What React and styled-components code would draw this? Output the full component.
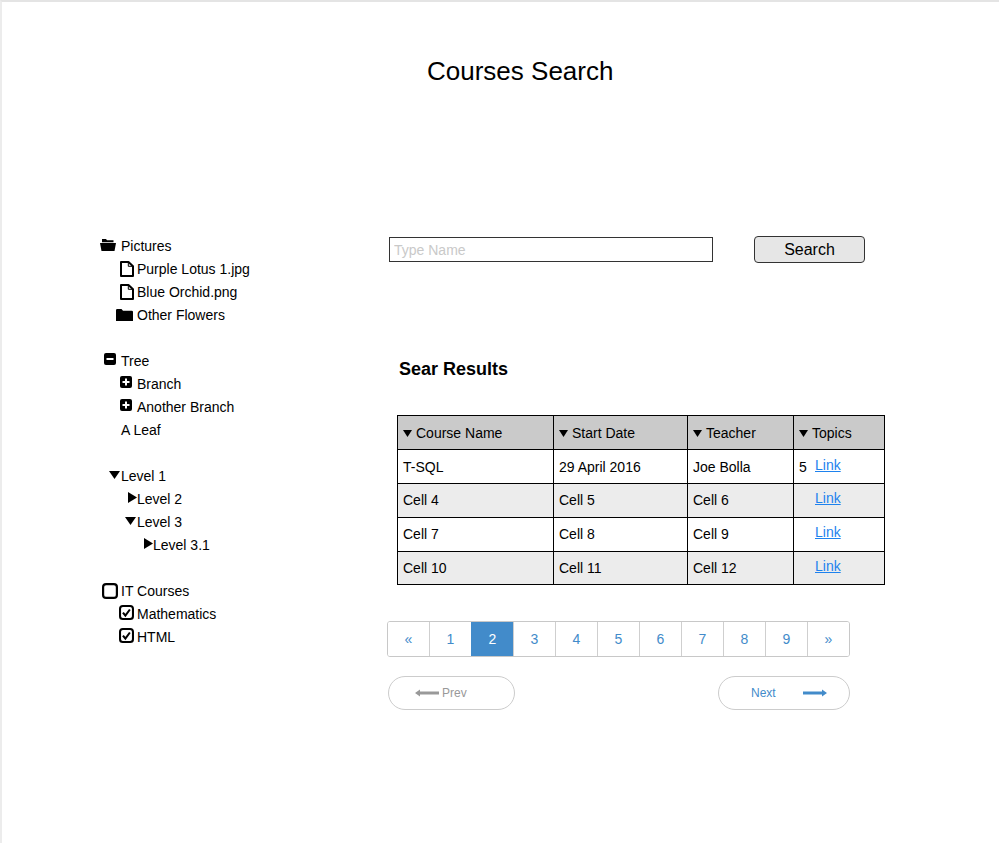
import React from "react";
import styled, { createGlobalStyle } from "styled-components";

const GlobalStyle = createGlobalStyle`
  html, body {
    margin: 0;
    padding: 0;
    background: #fff;
  }
  body {
    font-family: "Liberation Sans", Arial, sans-serif;
    color: #000;
  }
`;

const Page = styled.div`
  box-sizing: border-box;
  height: 843px;
  overflow: hidden;
  border-top: 2px solid #e4e4e4;
  border-left: 2px solid #ececec;
`;

const Header = styled.header`
  height: 232px;
  padding: 54px 0 0 425px;
  box-sizing: border-box;
`;

const Title = styled.h1`
  margin: 0;
  font-size: 26px;
  line-height: 30px;
  font-weight: 400;
`;

const Content = styled.div`
  display: flex;
  padding-left: 98px;
`;

const Sidebar = styled.aside`
  width: 287px;
  flex: none;
  display: flex;
  flex-direction: column;
  gap: 23px;
`;

const TreeGroup = styled.div`
  display: flex;
  flex-direction: column;
`;

const TreeRow = styled.div`
  display: flex;
  align-items: center;
  height: 23px;
  font-size: 14px;
  padding-left: ${(props) => (props.$level || 0) * 16}px;
`;

const IconSlot = styled.span`
  width: 21px;
  height: 23px;
  flex: none;
  display: flex;
  align-items: center;
  justify-content: flex-end;
  padding-right: ${(props) => props.$gap || 0}px;
  box-sizing: border-box;

  svg {
    display: block;
    position: relative;
    top: ${(props) => props.$lift || 0}px;
  }
`;

const Main = styled.main`
  width: 500px;
  flex: none;
`;

const SearchBar = styled.div`
  display: flex;
  align-items: center;
  gap: 41px;
  padding: 2px 0 0 2px;
`;

const SearchInput = styled.input`
  box-sizing: border-box;
  width: 324px;
  height: 25px;
  padding: 0 4px;
  border: 1px solid #333;
  border-radius: 0;
  background: #fff;
  font-family: inherit;
  font-size: 14px;
  outline: none;

  &::placeholder {
    color: #c9c9c9;
    opacity: 1;
  }
`;

const SearchButton = styled.button`
  box-sizing: border-box;
  width: 111px;
  height: 27px;
  padding: 0;
  border: 1px solid #333;
  border-radius: 4px;
  background: #e6e6e6;
  color: #000;
  font-family: inherit;
  font-size: 16px;
`;

const ResultsTitle = styled.h2`
  margin: 96px 0 35px 12px;
  font-size: 18px;
  line-height: 21px;
  font-weight: 700;
`;

const ResultsTable = styled.table`
  border-collapse: collapse;
  table-layout: fixed;
  width: 487px;
  margin-left: 10px;
  font-size: 14px;
`;

const HeadCell = styled.th`
  height: 34px;
  padding: 0 0 0 5px;
  box-sizing: border-box;
  border: 1px solid #000;
  background: #cacaca;
  font-weight: 400;
  text-align: left;
`;

const HeadLabel = styled.span`
  display: flex;
  align-items: center;
  gap: 4px;

  svg {
    margin-top: 2px;
  }
`;

const BodyRow = styled.tr`
  background: ${(props) => (props.$shaded ? "#ececec" : "#fff")};

  &:nth-child(n + 2) td {
    padding-bottom: 1px;
  }

  &:last-child td {
    height: 33px;
  }
`;

const Cell = styled.td`
  height: 34px;
  padding: 0 0 0 5px;
  box-sizing: border-box;
  border: 1px solid #000;
`;

const TopicsWrap = styled.div`
  display: flex;
  align-items: center;
`;

const TopicCount = styled.span`
  width: 16px;
  flex: none;
`;

const CellLink = styled.a`
  color: #1e82ee;
  text-decoration: underline;
  margin-bottom: 4px;
`;

const Pagination = styled.nav`
  display: flex;
  width: max-content;
  margin-top: 36px;
  border: 1px solid #c8c8c8;
  border-radius: 3px;
  overflow: hidden;
`;

const PageItem = styled.a`
  box-sizing: border-box;
  width: 42px;
  height: 34px;
  display: flex;
  align-items: center;
  justify-content: center;
  font-size: 14px;
  color: ${(props) => (props.$active ? "#fff" : "#428bca")};
  background: ${(props) => (props.$active ? "#428bca" : "#fff")};
  border-left: 1px solid ${(props) => (props.$active ? "#428bca" : "#cfcfcf")};

  &:first-child {
    border-left: 0;
    width: 41px;
  }
`;

const PagerNav = styled.div`
  display: flex;
  justify-content: space-between;
  width: 462px;
  margin: 19px 0 0 1px;
`;

const PagerButton = styled.a`
  box-sizing: border-box;
  width: ${(props) => props.$width}px;
  height: 34px;
  display: flex;
  align-items: center;
  gap: ${(props) => props.$gap}px;
  padding-left: ${(props) => props.$inset}px;
  border: 1px solid #ccc;
  border-radius: 17px;
  font-size: 12px;
  color: ${(props) => props.$color};
`;

const FolderOpen = () => (
  <svg width="16" height="12" viewBox="0 0 16 12">
    <path d="M2 0h4l1 1.200h6.500v2H2z" fill="#000" />
    <path d="M0 4h16l-1.500 8h-13z" fill="#000" />
  </svg>
);

const Folder = () => (
  <svg width="17" height="12" viewBox="0 0 17 12">
    <path d="M0 1.200Q0 0 1.200 0h4.300L7 1.800h8.800Q17 1.800 17 3v9H0z" fill="#000" />
  </svg>
);

const FileIcon = () => (
  <svg width="14" height="16" viewBox="0 0 14 16">
    <path d="M1 1h7.500L13 5.200V15H1z" fill="none" stroke="#000" strokeWidth="2" strokeLinejoin="round" />
    <path d="M8.300 1v4.300H13" fill="none" stroke="#000" strokeWidth="1" />
  </svg>
);

const MinusBox = () => (
  <svg width="12" height="12" viewBox="0 0 12 12">
    <rect width="12" height="12" rx="2" fill="#000" />
    <rect x="2.500" y="5" width="7" height="2" fill="#fff" />
  </svg>
);

const PlusBox = () => (
  <svg width="12" height="12" viewBox="0 0 12 12">
    <rect width="12" height="12" rx="2" fill="#000" />
    <path d="M2.500 5H5V2.500h2V5h2.500v2H7v2.500H5V7H2.500z" fill="#fff" />
  </svg>
);

const CaretDown = ({ width = 11, height = 8 }) => (
  <svg width={width} height={height} viewBox="0 0 10 7" preserveAspectRatio="none">
    <path d="M0 0h10L5 7z" fill="#000" />
  </svg>
);

const CaretRight = () => (
  <svg width="9" height="11" viewBox="0 0 8 10" preserveAspectRatio="none">
    <path d="M0 0l8 5-8 5z" fill="#000" />
  </svg>
);

const CheckBox = ({ checked, size = 16 }) => (
  <svg width={size} height={size} viewBox="0 0 16 16">
    <rect x="1.100" y="1.100" width="13.800" height="13.800" rx="3" fill="#fff" stroke="#000" strokeWidth="2.200" />
    {checked && <path d="M4.200 8.200l2.600 3 4.800-6.400" fill="none" stroke="#000" strokeWidth="2.200" />}
  </svg>
);

const Arrow = ({ color, flip }) => (
  <svg width="24" height="8" viewBox="0 0 24 8" style={flip ? { transform: "scaleX(-1)" } : undefined}>
    <path d="M0 2.600h19V.5l5 3.500-5 3.500V5.400H0z" fill={color} />
  </svg>
);

const Row = ({ level, icon, gap, lift, children }) => (
  <TreeRow $level={level}>
    <IconSlot $gap={gap} $lift={lift}>{icon}</IconSlot>
    <span>{children}</span>
  </TreeRow>
);

const PAGES = ["«", "1", "2", "3", "4", "5", "6", "7", "8", "9", "»"];
const COLUMNS = [
  { label: "Course Name", width: 156 },
  { label: "Start Date", width: 134 },
  { label: "Teacher", width: 106 },
  { label: "Topics", width: 91 },
];
const ROWS = [
  ["T-SQL", "29 April 2016", "Joe Bolla", "5"],
  ["Cell 4", "Cell 5", "Cell 6", ""],
  ["Cell 7", "Cell 8", "Cell 9", ""],
  ["Cell 10", "Cell 11", "Cell 12", ""],
];

function App() {
  return (
    <>
      <GlobalStyle />
      <Page>
        <Header>
          <Title>Courses Search</Title>
        </Header>
        <Content>
          <Sidebar>
            <TreeGroup>
              <Row icon={<FolderOpen />} gap={5} lift={-1}>Pictures</Row>
              <Row level={1} icon={<FileIcon />} gap={3}>Purple Lotus 1.jpg</Row>
              <Row level={1} icon={<FileIcon />} gap={3}>Blue Orchid.png</Row>
              <Row level={1} icon={<Folder />} gap={4}>Other Flowers</Row>
            </TreeGroup>
            <TreeGroup>
              <Row icon={<MinusBox />} gap={5} lift={-2}>Tree</Row>
              <Row level={1} icon={<PlusBox />} gap={5} lift={-2}>Branch</Row>
              <Row level={1} icon={<PlusBox />} gap={5} lift={-2}>Another Branch</Row>
              <Row>A Leaf</Row>
            </TreeGroup>
            <TreeGroup>
              <Row icon={<CaretDown />} gap={1} lift={-1}>Level 1</Row>
              <Row level={1} icon={<CaretRight />} lift={-1}>Level 2</Row>
              <Row level={1} icon={<CaretDown />} gap={1} lift={-1}>Level 3</Row>
              <Row level={2} icon={<CaretRight />} lift={-1}>Level 3.1</Row>
            </TreeGroup>
            <TreeGroup>
              <Row icon={<CheckBox />} gap={3}>IT Courses</Row>
              <Row level={1} icon={<CheckBox checked size={15} />} gap={3} lift={-1}>Mathematics</Row>
              <Row level={1} icon={<CheckBox checked size={15} />} gap={3} lift={-1}>HTML</Row>
            </TreeGroup>
          </Sidebar>

          <Main>
            <SearchBar>
              <SearchInput placeholder="Type Name" />
              <SearchButton>Search</SearchButton>
            </SearchBar>

            <ResultsTitle>Sear Results</ResultsTitle>

            <ResultsTable>
              <colgroup>
                {COLUMNS.map((col) => (
                  <col key={col.label} width={col.width} />
                ))}
              </colgroup>
              <thead>
                <tr>
                  {COLUMNS.map((col) => (
                    <HeadCell key={col.label}>
                      <HeadLabel>
                        <CaretDown width={9} height={7} />
                        {col.label}
                      </HeadLabel>
                    </HeadCell>
                  ))}
                </tr>
              </thead>
              <tbody>
                {ROWS.map((row, i) => (
                  <BodyRow key={row[0]} $shaded={i % 2 === 1}>
                    <Cell>{row[0]}</Cell>
                    <Cell>{row[1]}</Cell>
                    <Cell>{row[2]}</Cell>
                    <Cell>
                      <TopicsWrap>
                        <TopicCount>{row[3]}</TopicCount>
                        <CellLink href="#">Link</CellLink>
                      </TopicsWrap>
                    </Cell>
                  </BodyRow>
                ))}
              </tbody>
            </ResultsTable>

            <Pagination>
              {PAGES.map((page) => (
                <PageItem key={page} $active={page === "2"}>{page}</PageItem>
              ))}
            </Pagination>

            <PagerNav>
              <PagerButton $width={127} $gap={3} $inset={26} $color="#999">
                <Arrow color="#999" flip />
                Prev
              </PagerButton>
              <PagerButton $width={132} $gap={27} $inset={32} $color="#428bca">
                Next
                <Arrow color="#428bca" />
              </PagerButton>
            </PagerNav>
          </Main>
        </Content>
      </Page>
    </>
  );
}

export default App;
